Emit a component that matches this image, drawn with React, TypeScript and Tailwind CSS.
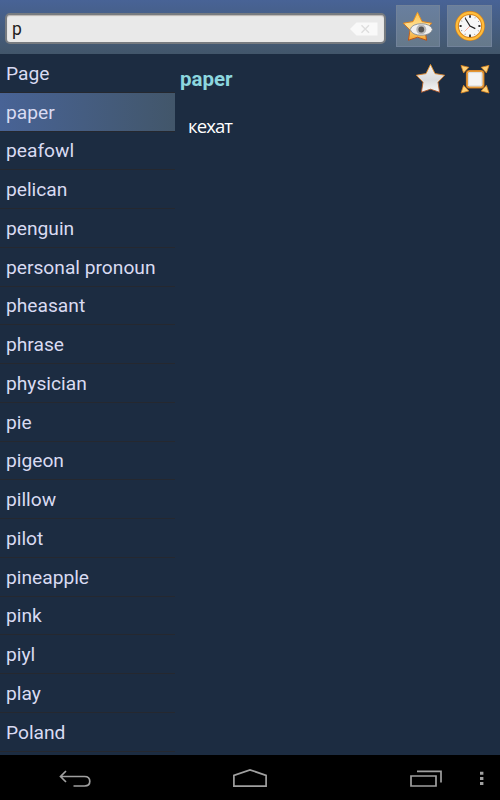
import { useState } from 'react';

const WORDS = [
  'Page', 'paper', 'peafowl', 'pelican', 'penguin', 'personal pronoun',
  'pheasant', 'phrase', 'physician', 'pie', 'pigeon', 'pillow', 'pilot',
  'pineapple', 'pink', 'piyl', 'play', 'Poland',
];

const TRANSLATIONS: Record<string, string> = { paper: 'кехат' };

const STAR = 'M15.5 1.5L20 10.6L29.7 12.2L23 19.2L24.6 29.3L15.5 26.2L6.4 29.3L8 19.2L1.3 12.2L11 10.6Z';

function FavoritesIcon() {
  return (
    <svg width="32" height="32" viewBox="0 0 32 32">
      <defs>
        <linearGradient id="gold" x1="0" y1="0" x2="0" y2="1">
          <stop offset="0" stopColor="#ffc44a" />
          <stop offset="0.5" stopColor="#ffdf93" />
          <stop offset="1" stopColor="#f5a52c" />
        </linearGradient>
        <linearGradient id="goldEdge" x1="0" y1="0" x2="0" y2="1">
          <stop offset="0" stopColor="#f7a21e" />
          <stop offset="1" stopColor="#b5501b" />
        </linearGradient>
      </defs>
      <path d={STAR} fill="url(#gold)" stroke="url(#goldEdge)" strokeWidth="1" strokeLinejoin="round" />
      <path d="M8.3 18.5C9.5 10.8 29.2 10.8 30.4 18.5C29.2 26.2 9.5 26.2 8.3 18.5Z" fill="#f0f0f0" stroke="#77818c" strokeWidth="0.8" />
      <circle cx="19.3" cy="18.5" r="5" fill="#b8b8b8" />
      <circle cx="19.3" cy="18.5" r="2.9" fill="#555" />
    </svg>
  );
}

function HistoryIcon() {
  return (
    <svg width="32" height="32" viewBox="0 0 32 32">
      <circle cx="16" cy="16" r="13" fill="#f7f7f7" stroke="#d9841b" strokeWidth="3.8" />
      <circle cx="16" cy="16" r="13.2" fill="none" stroke="#ffbd3b" strokeWidth="2.2" />
      <circle cx="16" cy="16" r="9.6" fill="none" stroke="#888" strokeWidth="1.1" strokeDasharray="0.8 4.226" strokeDashoffset="0.4" />
      <path d="M16 5.2v2.6M16 24.4v2.6M5.6 16h2M24.4 16h2" stroke="#333" strokeWidth="1.8" />
      <path d="M16 16L10.5 21.5" stroke="#ff9b85" strokeWidth="0.8" />
      <path d="M11.2 8.3L16 16L21.3 18.6" fill="none" stroke="#222" strokeWidth="1.2" />
    </svg>
  );
}

function StarIcon() {
  return (
    <svg width="31" height="31" viewBox="0 0 31 31">
      <defs>
        <linearGradient id="silver" x1="0" y1="0" x2="0" y2="1">
          <stop offset="0" stopColor="#f0f0f0" />
          <stop offset="0.55" stopColor="#dadbdd" />
          <stop offset="1" stopColor="#f8f8f8" />
        </linearGradient>
        <linearGradient id="silverEdge" x1="0" y1="0" x2="0" y2="1">
          <stop offset="0" stopColor="#ee9a26" />
          <stop offset="1" stopColor="#a85228" />
        </linearGradient>
      </defs>
      <path d={STAR} fill="url(#silver)" stroke="url(#silverEdge)" strokeWidth="0.9" strokeLinejoin="round" />
    </svg>
  );
}

function ExpandIcon() {
  return (
    <svg width="30" height="30" viewBox="0 0 30 30">
      <g fill="#ffd277" stroke="#d9841f" strokeWidth="0.8" strokeLinejoin="round">
        <path d="M1 1.4L8.8 3.3L3.6 8.9Z" />
        <path d="M29 1.4L21.2 3.3L26.4 8.9Z" />
        <path d="M1 29L8.8 27L3.6 21.3Z" />
        <path d="M29 29L21.2 27L26.4 21.3Z" />
      </g>
      <rect x="6.9" y="6.9" width="16.6" height="16.6" rx="2.6" fill="#f4f4f4" stroke="#c87620" strokeWidth="2" />
      <rect x="7.2" y="7.2" width="16" height="16" rx="2.2" fill="none" stroke="#f5ad45" strokeWidth="0.9" />
      <rect x="8.6" y="8.6" width="13.2" height="13.2" rx="1" fill="none" stroke="#d9dde0" strokeWidth="1" />
    </svg>
  );
}

function ClearIcon() {
  return (
    <svg width="28" height="14" viewBox="0 0 28 14">
      <path d="M0 7L6.5 0.5H27.5V13.5H6.5Z" fill="#f9f9f9" />
      <path d="M11.5 3.2L19 10.8M19 3.2L11.5 10.8" stroke="#dedede" strokeWidth="1.4" />
    </svg>
  );
}

function NavBar() {
  return (
    <nav className="h-[45px] shrink-0 bg-black">
      <svg width="500" height="45" viewBox="0 0 500 45" fill="none" stroke="#a0a0a0" strokeWidth="1.7">
        <path d="M66 16L60.5 21.5L66 27M60.5 21.5H84.5Q89.8 21.5 89.8 26.3Q89.8 31 84.5 31H73.5" />
        <path d="M233.9 31.1V20.4L250 14.9L266.1 20.4V31.1Z" />
        <path d="M411 21H436V31H411ZM417 16.4H441V27.5" />
        <path d="M480 18.3h3.4M480 23.4h3.4M480 28.5h3.4" strokeWidth="3" />
      </svg>
    </nav>
  );
}

export default function App() {
  const [query, setQuery] = useState('p');
  const [selected, setSelected] = useState('paper');

  return (
    <div className="flex h-[800px] w-[500px] flex-col overflow-hidden bg-[#1c2c41] font-['Roboto','Noto_Sans',sans-serif]">
      <header className="flex h-[54px] shrink-0 items-start bg-linear-to-b from-[#486396] to-[#42566a] pt-[5px] pl-[5px]">
        <div className="mt-[8px] flex h-[31px] w-[381px] items-center rounded-[5px] border-2 border-[#777b80] bg-[#e9e9e9] pr-[6px] pl-[5px] shadow-[inset_0_1px_1px_#b9b3b0]">
          <input
            value={query}
            onChange={e => setQuery(e.target.value)}
            className="min-w-0 flex-1 bg-transparent pt-[2px] text-[17.5px] text-[#222] outline-none"
          />
          <button onClick={() => setQuery('')}><ClearIcon /></button>
        </div>
        <button className="ml-[10px] flex h-[42px] w-[44px] items-center justify-center border border-[#71829a] bg-linear-to-b from-[#697f9f] to-[#66798b] pt-px">
          <FavoritesIcon />
        </button>
        <button className="ml-[7px] flex h-[42px] w-[45px] items-center justify-center border border-[#71829a] bg-linear-to-b from-[#697f9f] to-[#66798b]">
          <HistoryIcon />
        </button>
      </header>

      <div className="flex min-h-0 flex-1">
        <ul className="w-[175px] shrink-0">
          {WORDS.map(word => (
            <li
              key={word}
              onClick={() => setSelected(word)}
              className={`flex h-[38.75px] items-center border-b border-[#25282f] pt-[3px] pl-[6px] text-[19.2px] whitespace-nowrap text-[#d9dbf2] ${
                word === selected ? 'bg-linear-to-r from-[#486396] to-[#42566a]' : ''
              }`}
            >
              {word}
            </li>
          ))}
        </ul>

        <main className="flex-1 pl-[5px]">
          <div className="flex h-[49px] items-center">
            <h1 className="flex-1 pt-[2px] text-[20.5px] font-bold text-[#8cd7df]">{selected}</h1>
            <StarIcon />
            <div className="mr-[10px] ml-[14px]"><ExpandIcon /></div>
          </div>
          <p className="mt-[9px] pl-[8px] font-['Open_Sans','Noto_Sans',sans-serif] text-[18.5px] leading-7 tracking-[-0.9px] text-white">{TRANSLATIONS[selected]}</p>
        </main>
      </div>

      <NavBar />
    </div>
  );
}
